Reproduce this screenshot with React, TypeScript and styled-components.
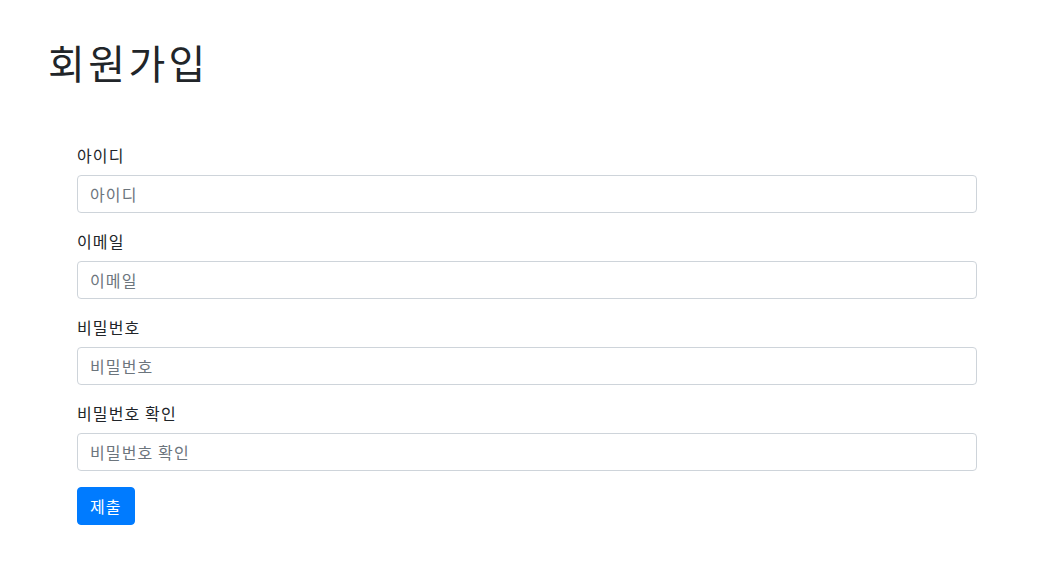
import React from "react";
import styled, { createGlobalStyle } from "styled-components";

const GlobalStyle = createGlobalStyle`
  * { box-sizing: border-box; }
  html, body { margin: 0; padding: 0; background: #fff; }
  body {
    font-family: "Noto Sans CJK KR", "Noto Sans", sans-serif;
    font-size: 16px;
    line-height: 1.5;
    color: #212529;
  }
`;

const Page = styled.div`
  padding: 38px 48px 40px 48px;
`;

const Title = styled.h1`
  margin: 0 0 57px 0;
  font-size: 40px;
  font-weight: 400;
  line-height: 48px;
  letter-spacing: 0.085em;
`;

const Form = styled.form`
  margin-left: 29px;
  width: 900px;
  display: flex;
  flex-direction: column;
`;

const Group = styled.div`
  display: flex;
  flex-direction: column;
  margin-bottom: 16px;
`;

const Label = styled.label`
  display: block;
  margin-bottom: 8px;
  font-size: 16px;
  line-height: 24px;
  letter-spacing: 0.07em;
  color: #212529;
`;

const Input = styled.input`
  display: block;
  width: 100%;
  height: 38px;
  padding: 6px 12px;
  font-family: inherit;
  font-size: 16px;
  line-height: 24px;
  letter-spacing: 0.07em;
  color: #495057;
  background: #fff;
  border: 1px solid #ced4da;
  border-radius: 4px;
  outline: none;
  &::placeholder { color: #6c757d; opacity: 1; }
`;

const Button = styled.button`
  align-self: flex-start;
  padding: 6px 12px;
  font-family: inherit;
  font-size: 16px;
  line-height: 24px;
  letter-spacing: 0.07em;
  color: #fff;
  background: #007bff;
  border: 1px solid #007bff;
  border-radius: 4px;
  cursor: pointer;
`;

const fields = [
  { id: "userid", label: "아이디", type: "text" },
  { id: "email", label: "이메일", type: "email" },
  { id: "password", label: "비밀번호", type: "password" },
  { id: "password2", label: "비밀번호 확인", type: "password" },
];

export default function App() {
  return (
    <>
      <GlobalStyle />
      <Page>
        <Title>회원가입</Title>
        <Form onSubmit={(e) => e.preventDefault()}>
          {fields.map((f) => (
            <Group key={f.id}>
              <Label htmlFor={f.id}>{f.label}</Label>
              <Input id={f.id} type={f.type} placeholder={f.label} />
            </Group>
          ))}
          <Button type="submit">제출</Button>
        </Form>
      </Page>
    </>
  );
}
